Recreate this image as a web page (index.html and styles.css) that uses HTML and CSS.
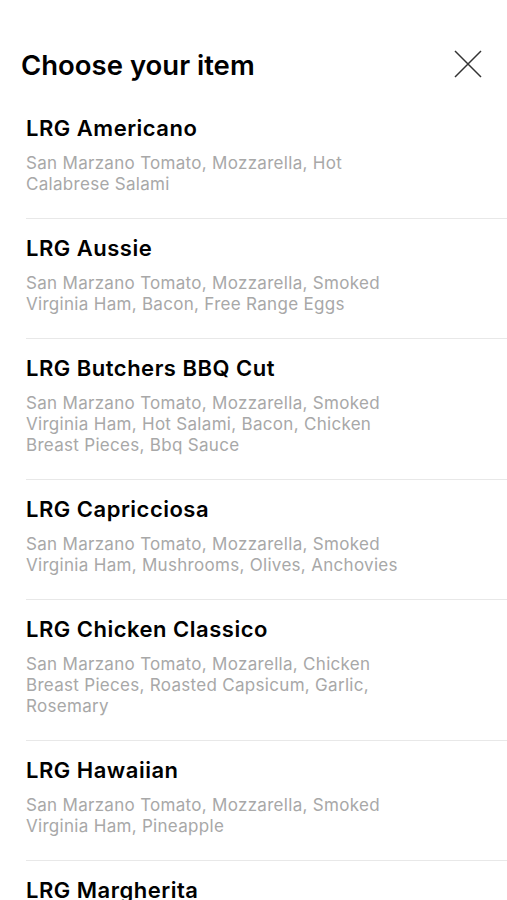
FILE: index.html
```html
<!DOCTYPE html>
<html lang="en">
<head>
  <meta charset="UTF-8" />
  <meta name="viewport" content="width=device-width, initial-scale=1.0">
  <title>Choose your item</title>
  <link rel="stylesheet" href="styles.css">
</head>
<body>

  <div class="sheet">
    <div class="sheet-header">
      <h1>Choose your item</h1>
      <button class="close-btn" aria-label="Close">
        <svg width="28" height="28" viewBox="0 0 28 28">
          <path d="M1 1 L27 27 M27 1 L1 27" stroke="#333" stroke-width="1.5" fill="none" />
        </svg>
      </button>
    </div>

    <ul class="item-list">
      <li class="item">
        <div class="item-name">LRG Americano</div>
        <div class="item-desc">San Marzano Tomato, Mozzarella, Hot Calabrese Salami</div>
      </li>
      <li class="item">
        <div class="item-name">LRG Aussie</div>
        <div class="item-desc">San Marzano Tomato, Mozzarella, Smoked Virginia Ham, Bacon, Free Range Eggs</div>
      </li>
      <li class="item">
        <div class="item-name">LRG Butchers BBQ Cut</div>
        <div class="item-desc">San Marzano Tomato, Mozzarella, Smoked Virginia Ham, Hot Salami, Bacon, Chicken Breast Pieces, Bbq Sauce</div>
      </li>
      <li class="item">
        <div class="item-name">LRG Capricciosa</div>
        <div class="item-desc">San Marzano Tomato, Mozzarella, Smoked Virginia Ham, Mushrooms, Olives, Anchovies</div>
      </li>
      <li class="item">
        <div class="item-name">LRG Chicken Classico</div>
        <div class="item-desc">San Marzano Tomato, Mozarella, Chicken Breast Pieces, Roasted Capsicum, Garlic, Rosemary</div>
      </li>
      <li class="item">
        <div class="item-name">LRG Hawaiian</div>
        <div class="item-desc">San Marzano Tomato, Mozzarella, Smoked Virginia Ham, Pineapple</div>
      </li>
      <li class="item">
        <div class="item-name">LRG Margherita</div>
        <div class="item-desc">San Marzano Tomato, Mozzarella, Basil, Extra Virgin Olive Oil</div>
      </li>
    </ul>
  </div>

</body>
</html>
```

FILE: styles.css
```css
* {
  box-sizing: border-box;
}
body {
  font-family: Inter, "Liberation Sans", sans-serif;
  margin: 0;
  padding: 0;
  background: #fff;
  color: #000;
  overflow: hidden;
}
.sheet {
  padding-top: 48px;
}
.sheet-header {
  display: flex;
  align-items: center;
  justify-content: space-between;
  padding: 0 25px 0 21px;
  margin-bottom: 17px;
}
h1 {
  font-size: 27.5px;
  font-weight: 600;
  margin: 0;
  line-height: 34px;
}
.close-btn {
  border: none;
  background: none;
  padding: 0;
  width: 28px;
  height: 28px;
  margin-top: -3px;
  cursor: pointer;
}
.item-list {
  list-style: none;
  margin: 0 0 0 26px;
  padding: 0;
}
.item {
  padding: 16px 0 23px;
  border-bottom: 1px solid #e8e8e8;
}
.item-name {
  font-size: 22px;
  font-weight: 600;
  line-height: 26px;
  letter-spacing: 0.5px;
}
.item-desc {
  margin-top: 12px;
  font-size: 17px;
  line-height: 21px;
  letter-spacing: 0.3px;
  color: #a8a8a8;
  max-width: 385px;
}
```
